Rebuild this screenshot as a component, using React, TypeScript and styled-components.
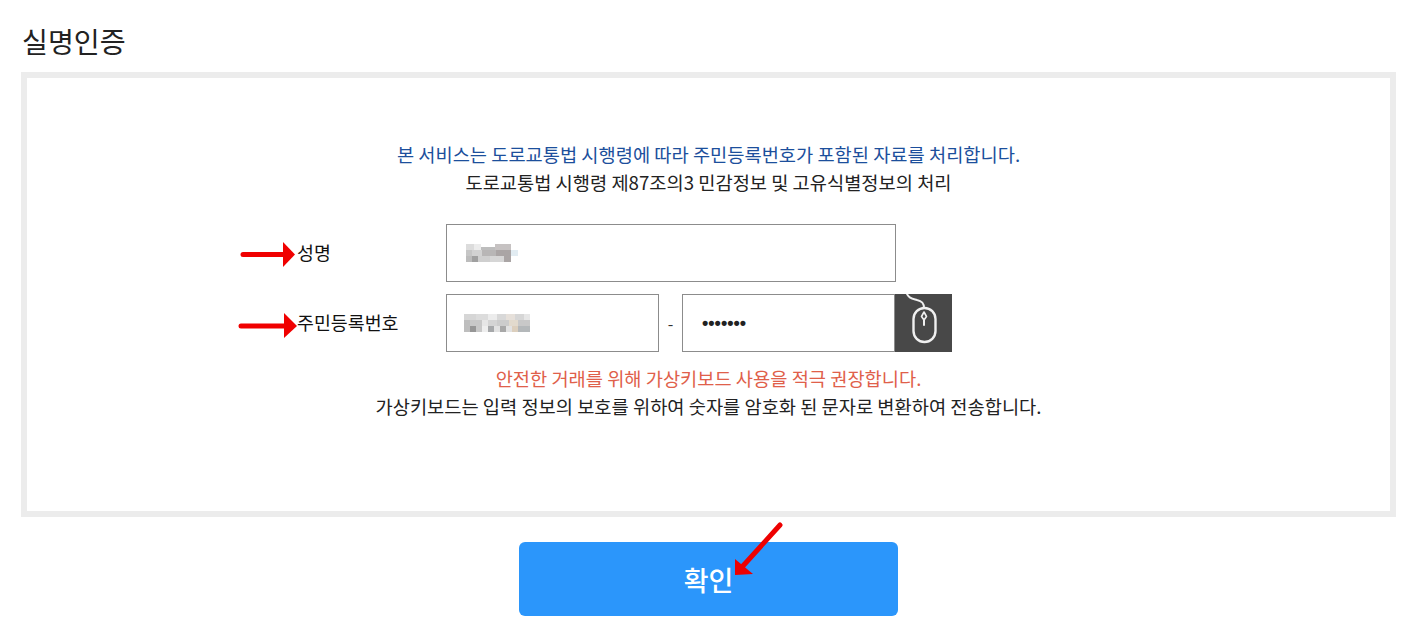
import styled, { createGlobalStyle } from "styled-components";

const GlobalStyle = createGlobalStyle`
  html, body {
    margin: 0;
    padding: 0;
    background: #fff;
  }
  body {
    font-family: "Noto Sans CJK KR", "Noto Sans", sans-serif;
    color: #222;
  }
`;

const Page = styled.div`
  position: relative;
  width: 1422px;
  height: 627px;
  overflow: hidden;
  padding: 21px 26px 0 21px;
  box-sizing: border-box;
`;

const Title = styled.h2`
  margin: 0 0 11px 1px;
  font-size: 28.2px;
  line-height: 40px;
  font-weight: 400;
  color: #222;
`;

const Panel = styled.section`
  box-sizing: border-box;
  width: 1375px;
  height: 445px;
  border: 6px solid #ececec;
  padding: 62px 0 0;
  display: flex;
  flex-direction: column;
`;

const Notice = styled.p<{ $color?: string }>`
  margin: 0;
  text-align: center;
  font-size: 18.7px;
  line-height: 28px;
  color: ${(p) => p.$color || "#222"};
`;

const Form = styled.div`
  margin: 28px 0 12px 270px;
  display: flex;
  flex-direction: column;
  gap: 12px;
`;

const Row = styled.div`
  display: flex;
  align-items: center;
  height: 58px;
`;

const Label = styled.label`
  width: 149px;
  font-size: 18.4px;
  color: #111;
  position: relative;
  top: -1px;
`;

const Field = styled.div<{ $width: number; $inset: number }>`
  box-sizing: border-box;
  width: ${(p) => p.$width}px;
  height: 58px;
  border: 1px solid #8c8c8c;
  background: #fff;
  display: flex;
  align-items: center;
  padding-left: ${(p) => p.$inset}px;
`;

const Dash = styled.span`
  width: 23px;
  text-align: center;
  font-size: 16px;
  color: #333;
`;

const Dots = styled.span`
  font-size: 18px;
  color: #222;
  font-family: "Liberation Sans", sans-serif;
  font-weight: 700;
`;

const KeyboardButton = styled.button`
  width: 57px;
  height: 58px;
  border: 0;
  padding: 0;
  background: #484848;
  display: block;
`;

const Actions = styled.div`
  display: flex;
  justify-content: center;
  margin-top: 25px;
`;

const SubmitButton = styled.button`
  width: 379px;
  height: 74px;
  border: 0;
  border-radius: 6px;
  background: #2b96fb;
  color: #fff;
  font-family: inherit;
  font-size: 27px;
  font-weight: 500;
`;

const Arrow = styled.svg<{ $x: number; $y: number }>`
  position: absolute;
  left: ${(p) => p.$x}px;
  top: ${(p) => p.$y}px;
  overflow: visible;
`;

const MosaicBlock = styled.svg`
  display: block;
`;

type Cell = [number, number, number, number, string];

const nameCells: Cell[] = [
  [0, 0, 8, 6, "#dcdcdc"], [8, 0, 7, 6, "#ececec"], [15, 3, 14, 3, "#bdbdbd"], [29, 0, 16, 6, "#c6c2c2"],
  [0, 6, 6, 6, "#c6c6c6"], [6, 6, 10, 6, "#d2d2d2"], [16, 6, 14, 6, "#b8b6b6"], [30, 6, 15, 6, "#aaa5a5"],
  [45, 6, 7, 6, "#e2ecf2"], [0, 12, 6, 6, "#bcbcbc"], [6, 12, 6, 6, "#a0a0a0"], [12, 12, 12, 6, "#cfcfcf"],
  [24, 12, 14, 6, "#d6d6d6"], [38, 12, 7, 6, "#aaa5a5"],
];

const idCells: Cell[] = [
  [0, 0, 12, 6, "#d6d6d6"], [12, 0, 12, 6, "#dcdcdc"], [24, 0, 9, 6, "#ececec"], [33, 0, 9, 6, "#d8d8d8"],
  [42, 0, 9, 6, "#e6e0da"], [51, 0, 9, 6, "#d6d6d6"], [60, 0, 6, 6, "#e6e6e6"],
  [0, 6, 6, 6, "#bebebe"], [6, 6, 12, 6, "#c8c8c8"], [18, 6, 6, 6, "#e6e6e6"], [24, 6, 9, 6, "#d4d4d4"],
  [33, 6, 12, 6, "#cccccc"], [45, 6, 9, 6, "#e2dacd"], [54, 6, 12, 6, "#c8c8c8"],
  [0, 12, 6, 6, "#bebebe"], [6, 12, 6, 6, "#969696"], [12, 12, 6, 6, "#c8c8c8"], [18, 12, 6, 6, "#eeeeee"],
  [24, 12, 6, 6, "#a6a8aa"], [30, 12, 6, 6, "#e2e2e2"], [36, 12, 6, 6, "#a8a8a8"], [42, 12, 6, 6, "#e2e2e2"],
  [48, 12, 6, 6, "#dccfbd"], [54, 12, 12, 6, "#b4b8ba"],
];

const Mosaic = ({ cells, width }: { cells: Cell[]; width: number }) => (
  <MosaicBlock width={width} height={18} viewBox={`0 0 ${width} 18`}>
    <g style={{ filter: "blur(0.6px)" }}>
      {cells.map(([x, y, w, h, fill], i) => (
        <rect key={i} x={x} y={y} width={w} height={h} fill={fill} />
      ))}
    </g>
  </MosaicBlock>
);

const MouseIcon = () => (
  <svg width="57" height="58" viewBox="0 0 57 58" fill="none" stroke="#f0f0f0" strokeLinecap="round" strokeLinejoin="round">
    <path d="M12 0 C14 5 18 5 22 6 C27 7 29 9 29 14" strokeWidth="2" />
    <rect x="18.5" y="14" width="22" height="34" rx="11" strokeWidth="2.4" />
    <path d="M29 18 L31.5 22.5 L29 26 L26.5 22.5 Z" strokeWidth="1.6" />
    <path d="M29 26 V31" strokeWidth="2" />
  </svg>
);

const App = () => {
  return (
    <Page>
      <GlobalStyle />
      <Title>실명인증</Title>
      <Panel>
        <Notice $color="#1c4f9c">본 서비스는 도로교통법 시행령에 따라 주민등록번호가 포함된 자료를 처리합니다.</Notice>
        <Notice>도로교통법 시행령 제87조의3 민감정보 및 고유식별정보의 처리</Notice>
        <Form>
          <Row>
            <Label>성명</Label>
            <Field $width={450} $inset={19}>
              <Mosaic cells={nameCells} width={52} />
            </Field>
          </Row>
          <Row>
            <Label>주민등록번호</Label>
            <Field $width={213} $inset={17}>
              <Mosaic cells={idCells} width={66} />
            </Field>
            <Dash>-</Dash>
            <Field $width={213} $inset={19}>
              <Dots>•••••••</Dots>
            </Field>
            <KeyboardButton aria-label="가상키보드">
              <MouseIcon />
            </KeyboardButton>
          </Row>
        </Form>
        <Notice $color="#e0604a">안전한 거래를 위해 가상키보드 사용을 적극 권장합니다.</Notice>
        <Notice>가상키보드는 입력 정보의 보호를 위하여 숫자를 암호화 된 문자로 변환하여 전송합니다.</Notice>
      </Panel>
      <Actions>
        <SubmitButton>확인</SubmitButton>
      </Actions>

      <Arrow $x={240} $y={242} width="58" height="26" viewBox="0 0 58 26">
        <path d="M3 12.5 H46" stroke="#f00000" strokeWidth="5" strokeLinecap="round" />
        <path d="M43 0 L55 12.5 L43 25 Z" fill="#f00000" />
      </Arrow>
      <Arrow $x={238} $y={312} width="60" height="28" viewBox="0 0 60 28">
        <path d="M3 14 H48" stroke="#f00000" strokeWidth="5" strokeLinecap="round" />
        <path d="M46 1 L59 14 L46 26 Z" fill="#f00000" />
      </Arrow>
      <Arrow $x={730} $y={520} width="54" height="60" viewBox="0 0 54 60">
        <path d="M50 5 L12 47" stroke="#ee0000" strokeWidth="5" strokeLinecap="round" />
        <path d="M5 55 L5 39 L23 54 Z" fill="#ee0000" />
      </Arrow>
    </Page>
  );
};

export default App;
